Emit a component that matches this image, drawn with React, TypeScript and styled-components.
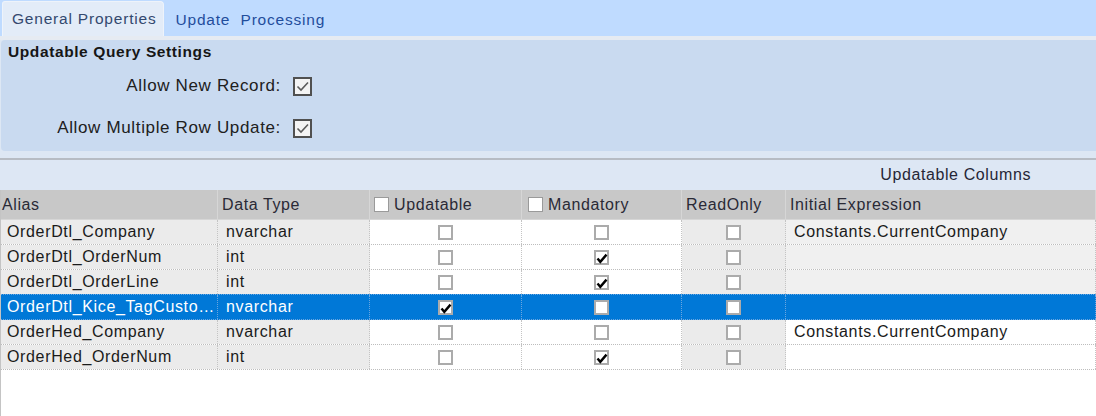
import React from 'react'
import styled, { createGlobalStyle } from 'styled-components'

const GlobalStyle = createGlobalStyle`
  html, body {
    margin: 0;
    padding: 0;
    background: #ffffff;
  }
  body {
    font-family: "Liberation Sans", Arial, sans-serif;
    color: #1a1a1a;
  }
`

// Outer frame of the query properties tab control
const Frame = styled.div`
  width: 1096px;
  height: 416px;
  display: flex;
  flex-direction: column;
  overflow: hidden;
  background: #ffffff;
`

const TabStrip = styled.div`
  height: 36px;
  display: flex;
  align-items: flex-end;
  background: #bfdbff;
  padding-left: 2px;
  box-sizing: border-box;
`

const Tab = styled.div<{ $active?: boolean }>`
  height: ${p => (p.$active ? '35px' : '33px')};
  display: flex;
  align-items: center;
  padding: ${p => (p.$active ? '0 6px 0 9px' : '0 12px')};
  box-sizing: border-box;
  font-size: 15.5px;
  letter-spacing: 0.8px;
  color: ${p => (p.$active ? '#34496f' : '#1f4d9c')};
  background: ${p => (p.$active ? '#e3ecf8' : 'transparent')};
  border: ${p => (p.$active ? '1px solid #eef3fa' : 'none')};
  border-bottom: none;
  border-radius: 3px 4px 0 0;
  white-space: pre;
`

const TabBody = styled.div`
  flex: 1;
  display: flex;
  flex-direction: column;
  border-top: 4px solid #e6ebf2;
  background: #dde7f4;
`

const SettingsPanel = styled.div`
  height: 111px;
  margin: 0 0 0 1px;
  padding: 2px 8px 0 7px;
  box-sizing: border-box;
  background: #c9daf0;
  border-radius: 4px 0 0 4px;
`

const PanelTitle = styled.div`
  font-size: 15.5px;
  font-weight: bold;
  letter-spacing: 0.6px;
  line-height: 20px;
  color: #161616;
`

const SettingsGrid = styled.div`
  display: grid;
  grid-template-columns: 273px auto;
  column-gap: 12px;
  row-gap: 18px;
  margin-top: 12px;
  align-items: center;
`

const SettingLabel = styled.div`
  text-align: right;
  font-size: 17px;
  letter-spacing: 0.65px;
  line-height: 24px;
  color: #202020;
`

const BigBox = styled.span`
  width: 19px;
  height: 19px;
  box-sizing: border-box;
  border: 2px solid #505050;
  background: #f4f4f4;
  display: flex;
  align-items: center;
  justify-content: center;
`

const BandGap = styled.div`
  height: 7px;
  border-bottom: 2px solid #b7bcc4;
`

const Caption = styled.div`
  height: 30px;
  display: flex;
  align-items: center;
  justify-content: flex-end;
  padding-right: 65px;
  font-size: 16px;
  letter-spacing: 0.6px;
  color: #262636;
`

const GridArea = styled.div`
  flex: 1;
  background: #ffffff;
  border-left: 1px solid #c4c4c4;
`

const columns = '217px 152px 152px 160px 104px 1fr'

const HeaderRow = styled.div`
  display: grid;
  grid-template-columns: ${columns};
  height: 30px;
  background: #c8c8c8;
  border-bottom: 1px solid #d6d6d6;
  box-sizing: border-box;
`

const HeaderCell = styled.div<{ $pad?: number }>`
  display: flex;
  align-items: center;
  gap: 5px;
  padding-left: ${p => p.$pad ?? 4}px;
  border-right: 1px solid #d6d6d6;
  font-size: 16px;
  letter-spacing: 0.6px;
  color: #2a2a36;
  white-space: nowrap;
  overflow: hidden;
`

const HeadBox = styled.span`
  width: 15px;
  height: 15px;
  box-sizing: border-box;
  border: 1px solid #9a9a9a;
  background: #ffffff;
  flex: none;
`

const Row = styled.div<{ $selected?: boolean }>`
  display: grid;
  grid-template-columns: ${columns};
  height: ${p => (p.$selected ? '26px' : '25px')};
  box-sizing: border-box;
  border-bottom: 1px dotted ${p => (p.$selected ? '#6aa6e0' : '#bdbdbd')};
  ${p => (p.$selected ? 'border-top: 1px dotted #6aa6e0; margin-top: -1px;' : '')}
  background: ${p => (p.$selected ? '#0078d7' : 'transparent')};
  color: ${p => (p.$selected ? '#ffffff' : '#1a1a1a')};
`

type Shade = 'gray' | 'white' | 'soft'
const shades: Record<Shade, string> = {
  gray: '#ebebeb',
  white: '#ffffff',
  soft: '#f0f0f0',
}

const Cell = styled.div<{ $shade: Shade; $center?: boolean; $pad?: number; $selected?: boolean }>`
  display: flex;
  align-items: center;
  justify-content: ${p => (p.$center ? 'center' : 'flex-start')};
  padding-left: ${p => (p.$center ? 0 : p.$pad ?? 8)}px;
  background: ${p => (p.$selected ? 'transparent' : shades[p.$shade])};
  border-right: 1px dotted ${p => (p.$selected ? '#6aa6e0' : '#c4c4c4')};
  font-size: 16px;
  letter-spacing: 0.65px;
  white-space: nowrap;
  overflow: hidden;
`

const CellBox = styled.span`
  width: 15px;
  height: 15px;
  box-sizing: border-box;
  border: 2px solid #ababab;
  background: #ffffff;
  position: relative;
`

const Tick = () => (
  <svg width="13" height="13" viewBox="0 0 13 13" style={{ position: 'absolute', left: 0, top: 0 }}>
    <path d="M1.5 6.5 L4.3 9.8 L10.5 2.6" fill="none" stroke="#000" strokeWidth="2.4" strokeLinejoin="miter" />
  </svg>
)

const GridCheck = ({ checked }: { checked?: boolean }) => <CellBox>{checked && <Tick />}</CellBox>

const BigCheck = () => (
  <BigBox>
    <svg width="15" height="15" viewBox="0 0 15 15">
      <path d="M2.5 7.5 L6 11 L13 3.5" fill="none" stroke="#5c5c5c" strokeWidth="1.6" />
    </svg>
  </BigBox>
)

type ColumnRow = {
  alias: string
  type: string
  updatable: boolean
  mandatory: boolean
  readOnly: boolean
  expression: string
  exprShade: Shade
  selected?: boolean
}

const rows: ColumnRow[] = [
  { alias: 'OrderDtl_Company', type: 'nvarchar', updatable: false, mandatory: false, readOnly: false, expression: 'Constants.CurrentCompany', exprShade: 'soft' },
  { alias: 'OrderDtl_OrderNum', type: 'int', updatable: false, mandatory: true, readOnly: false, expression: '', exprShade: 'soft' },
  { alias: 'OrderDtl_OrderLine', type: 'int', updatable: false, mandatory: true, readOnly: false, expression: '', exprShade: 'soft' },
  { alias: 'OrderDtl_Kice_TagCusto…', type: 'nvarchar', updatable: true, mandatory: false, readOnly: false, expression: '', exprShade: 'soft', selected: true },
  { alias: 'OrderHed_Company', type: 'nvarchar', updatable: false, mandatory: false, readOnly: false, expression: 'Constants.CurrentCompany', exprShade: 'white' },
  { alias: 'OrderHed_OrderNum', type: 'int', updatable: false, mandatory: true, readOnly: false, expression: '', exprShade: 'white' },
]

export default function App() {
  return (
    <>
      <GlobalStyle />
      <Frame>
        <TabStrip>
          <Tab $active>General Properties</Tab>
          <Tab>{'Update  Processing'}</Tab>
        </TabStrip>
        <TabBody>
          <SettingsPanel>
            <PanelTitle>Updatable Query Settings</PanelTitle>
            <SettingsGrid>
              <SettingLabel>Allow New Record:</SettingLabel>
              <BigCheck />
              <SettingLabel>Allow Multiple Row Update:</SettingLabel>
              <BigCheck />
            </SettingsGrid>
          </SettingsPanel>
          <BandGap />
          <Caption>Updatable Columns</Caption>
          <GridArea>
            <HeaderRow>
              <HeaderCell $pad={1}>Alias</HeaderCell>
              <HeaderCell>Data Type</HeaderCell>
              <HeaderCell><HeadBox />Updatable</HeaderCell>
              <HeaderCell $pad={6}><HeadBox />Mandatory</HeaderCell>
              <HeaderCell>ReadOnly</HeaderCell>
              <HeaderCell>Initial Expression</HeaderCell>
            </HeaderRow>
            {rows.map(r => (
              <Row key={r.alias} $selected={r.selected}>
                <Cell $shade="gray" $pad={6} $selected={r.selected}>{r.alias}</Cell>
                <Cell $shade="gray" $selected={r.selected}>{r.type}</Cell>
                <Cell $shade="white" $center $selected={r.selected}><GridCheck checked={r.updatable} /></Cell>
                <Cell $shade="white" $center $selected={r.selected}><GridCheck checked={r.mandatory} /></Cell>
                <Cell $shade="gray" $center $selected={r.selected}><GridCheck checked={r.readOnly} /></Cell>
                <Cell $shade={r.exprShade} $selected={r.selected}>{r.expression}</Cell>
              </Row>
            ))}
          </GridArea>
        </TabBody>
      </Frame>
    </>
  )
}
